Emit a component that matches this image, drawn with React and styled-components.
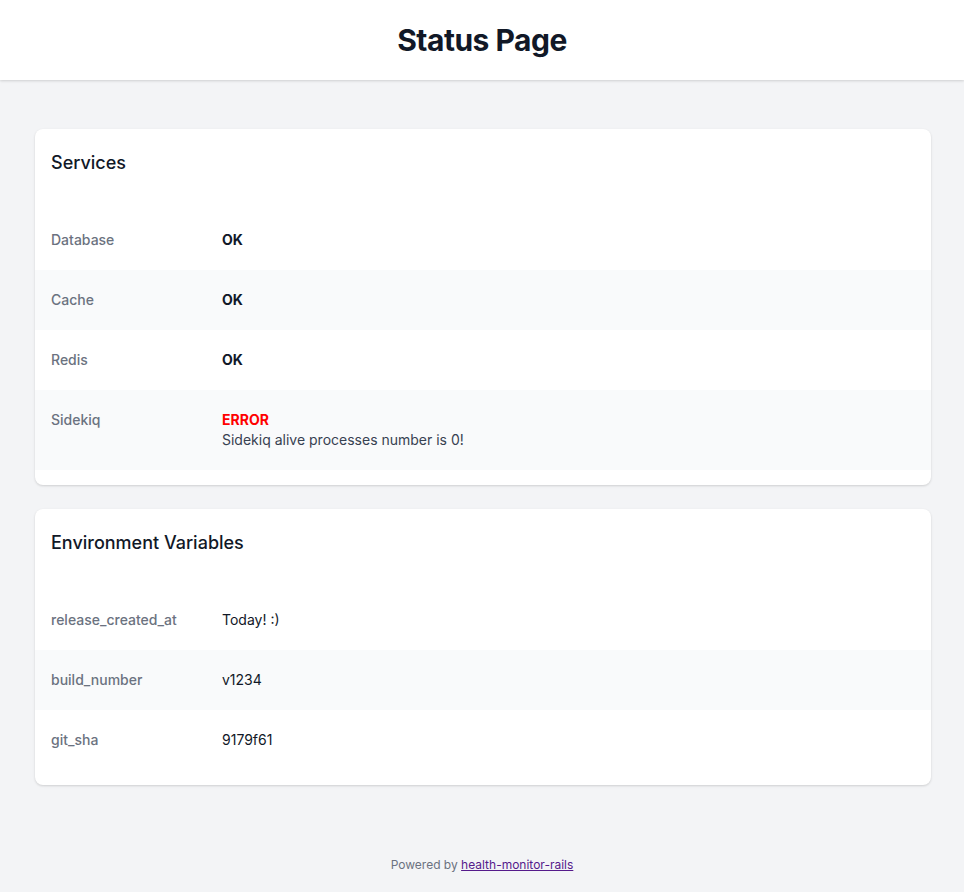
import styled, { createGlobalStyle } from "styled-components";

const GlobalStyle = createGlobalStyle`
  html, body {
    margin : 0;
    padding : 0;
    background : #f3f4f6;
    font-family : Inter, "Liberation Sans", sans-serif;
    color : #111827;
  }
`;

const Header = styled.header`
  height : 80px;
  background : #ffffff;
  box-shadow : 0 1px 3px rgba(0,0,0,0.1), 0 1px 2px rgba(0,0,0,0.06);
  display : flex;
  align-items : center;
  justify-content : center;
`;

const Title = styled.h1`
  margin : 0;
  font-size : 30px;
  line-height : 36px;
  font-weight : 700;
  letter-spacing : -0.5px;
  color : #111827;
`;

const Main = styled.main`
  padding : 49px 33px 48px 35px;
  display : flex;
  flex-direction : column;
  gap : 24px;
`;

const Card = styled.section`
  background : #ffffff;
  border-radius : 8px;
  box-shadow : 0 1px 3px rgba(0,0,0,0.1), 0 1px 2px rgba(0,0,0,0.06);
  overflow : hidden;
  padding-bottom : 15px;
`;

const CardHeader = styled.div`
  padding : 20px 16px;
`;

const CardTitle = styled.h3`
  margin : 0;
  font-size : 18px;
  line-height : 28px;
  font-weight : 500;
  color : #111827;
`;

const List = styled.dl`
  margin : 0;
  padding-top : 13px;
`;

const Row = styled.div`
  display : grid;
  grid-template-columns : 171px 1fr;
  padding : 20px 16px;
  background : ${(p) => (p.$shaded ? "#f9fafb" : "#ffffff")};
`;

const Label = styled.dt`
  font-size : 14px;
  line-height : 20px;
  font-weight : 500;
  color : #6b7280;
`;

const Value = styled.dd`
  margin : 0;
  font-size : 14px;
  line-height : 20px;
  color : #111827;
`;

const Status = styled.div`
  font-weight : 700;
  color : ${(p) => (p.$error ? "#ff0000" : "#111827")};
`;

const Message = styled.div`
  color : #374151;
`;

const Footer = styled.footer`
  padding : 24px 0;
  text-align : center;
  font-size : 12px;
  line-height : 16px;
  color : #6b7280;

  a {
    color : #551a8b;
    text-decoration : underline;
  }
`;

const services = [
  { name: "Database", status: "OK" },
  { name: "Cache", status: "OK" },
  { name: "Redis", status: "OK" },
  { name: "Sidekiq", status: "ERROR", message: "Sidekiq alive processes number is 0!" },
];

const envs = [
  { name: "release_created_at", value: "Today! :)" },
  { name: "build_number", value: "v1234" },
  { name: "git_sha", value: "9179f61" },
];

const App = () => {
  return (
    <>
      <GlobalStyle />
      <Header>
        <Title>Status Page</Title>
      </Header>
      <Main>
        <Card>
          <CardHeader>
            <CardTitle>Services</CardTitle>
          </CardHeader>
          <List>
            {services.map((s, i) => (
              <Row key={s.name} $shaded={i % 2 === 1}>
                <Label>{s.name}</Label>
                <Value>
                  <Status $error={s.status === "ERROR"}>{s.status}</Status>
                  {s.message && <Message>{s.message}</Message>}
                </Value>
              </Row>
            ))}
          </List>
        </Card>
        <Card>
          <CardHeader>
            <CardTitle>Environment Variables</CardTitle>
          </CardHeader>
          <List>
            {envs.map((e, i) => (
              <Row key={e.name} $shaded={i % 2 === 1}>
                <Label>{e.name}</Label>
                <Value>{e.value}</Value>
              </Row>
            ))}
          </List>
        </Card>
      </Main>
      <Footer>
        Powered by <a href="#">health-monitor-rails</a>
      </Footer>
    </>
  );
};

export default App;
